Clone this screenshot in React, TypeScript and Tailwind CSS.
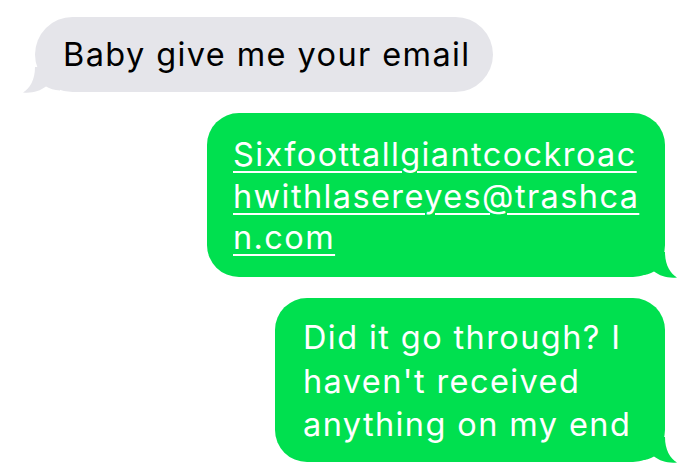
import React from "react";

const font = { fontFamily: "Inter, 'Liberation Sans', Arial, sans-serif" };

function Tail({ color, side }: { color: string; side: "left" | "right" }) {
  return (
    <svg
      width="40"
      height="26"
      viewBox="0 0 40 26"
      className={
        side === "left"
          ? "absolute left-[-13px] bottom-[-1px]"
          : "absolute right-[-13px] bottom-[-1px] -scale-x-100"
      }
    >
      <path
        d="M13,0 C13,13 8,21 1,25.5 C10,26.5 18,24 24,19.5 C28,22 32,23 38,23.5 L40,0 Z"
        fill={color}
      />
    </svg>
  );
}

export default function App() {
  return (
    <div className="w-[700px] h-[465px] bg-white overflow-hidden flex flex-col" style={font}>
      <div className="pt-[17px] pl-[35px]">
        <div className="relative w-[458px] h-[75px] rounded-[38px] bg-[#e5e5ea] pl-[28px] flex items-center">
          <Tail color="#e5e5ea" side="left" />
          <span className="relative text-[32.5px] leading-[42px] tracking-[1.4px] text-black whitespace-nowrap">
            Baby give me your email
          </span>
        </div>
      </div>
      <div className="pt-[21px] pr-[35px] flex justify-end">
        <div className="relative w-[458px] h-[164px] rounded-[32px] bg-[#00e04f] pl-[26px] pt-[21px]">
          <Tail color="#00e04f" side="right" />
          <div className="relative text-[32.5px] leading-[41.5px] tracking-[1.4px] text-white whitespace-nowrap underline decoration-2 underline-offset-[5px]">
            <div>Sixfoottallgiantcockroac</div>
            <div>hwithlasereyes@trashca</div>
            <div>n.com</div>
          </div>
        </div>
      </div>
      <div className="pt-[21px] pr-[35px] flex justify-end">
        <div className="relative w-[390px] h-[164px] rounded-[32px] bg-[#00e04f] pl-[28px] pt-[18px]">
          <Tail color="#00e04f" side="right" />
          <div className="relative text-[32.5px] leading-[43.5px] tracking-[1.4px] text-white whitespace-nowrap">
            <div>Did it go through? I</div>
            <div>haven't received</div>
            <div>anything on my end</div>
          </div>
        </div>
      </div>
    </div>
  );
}
